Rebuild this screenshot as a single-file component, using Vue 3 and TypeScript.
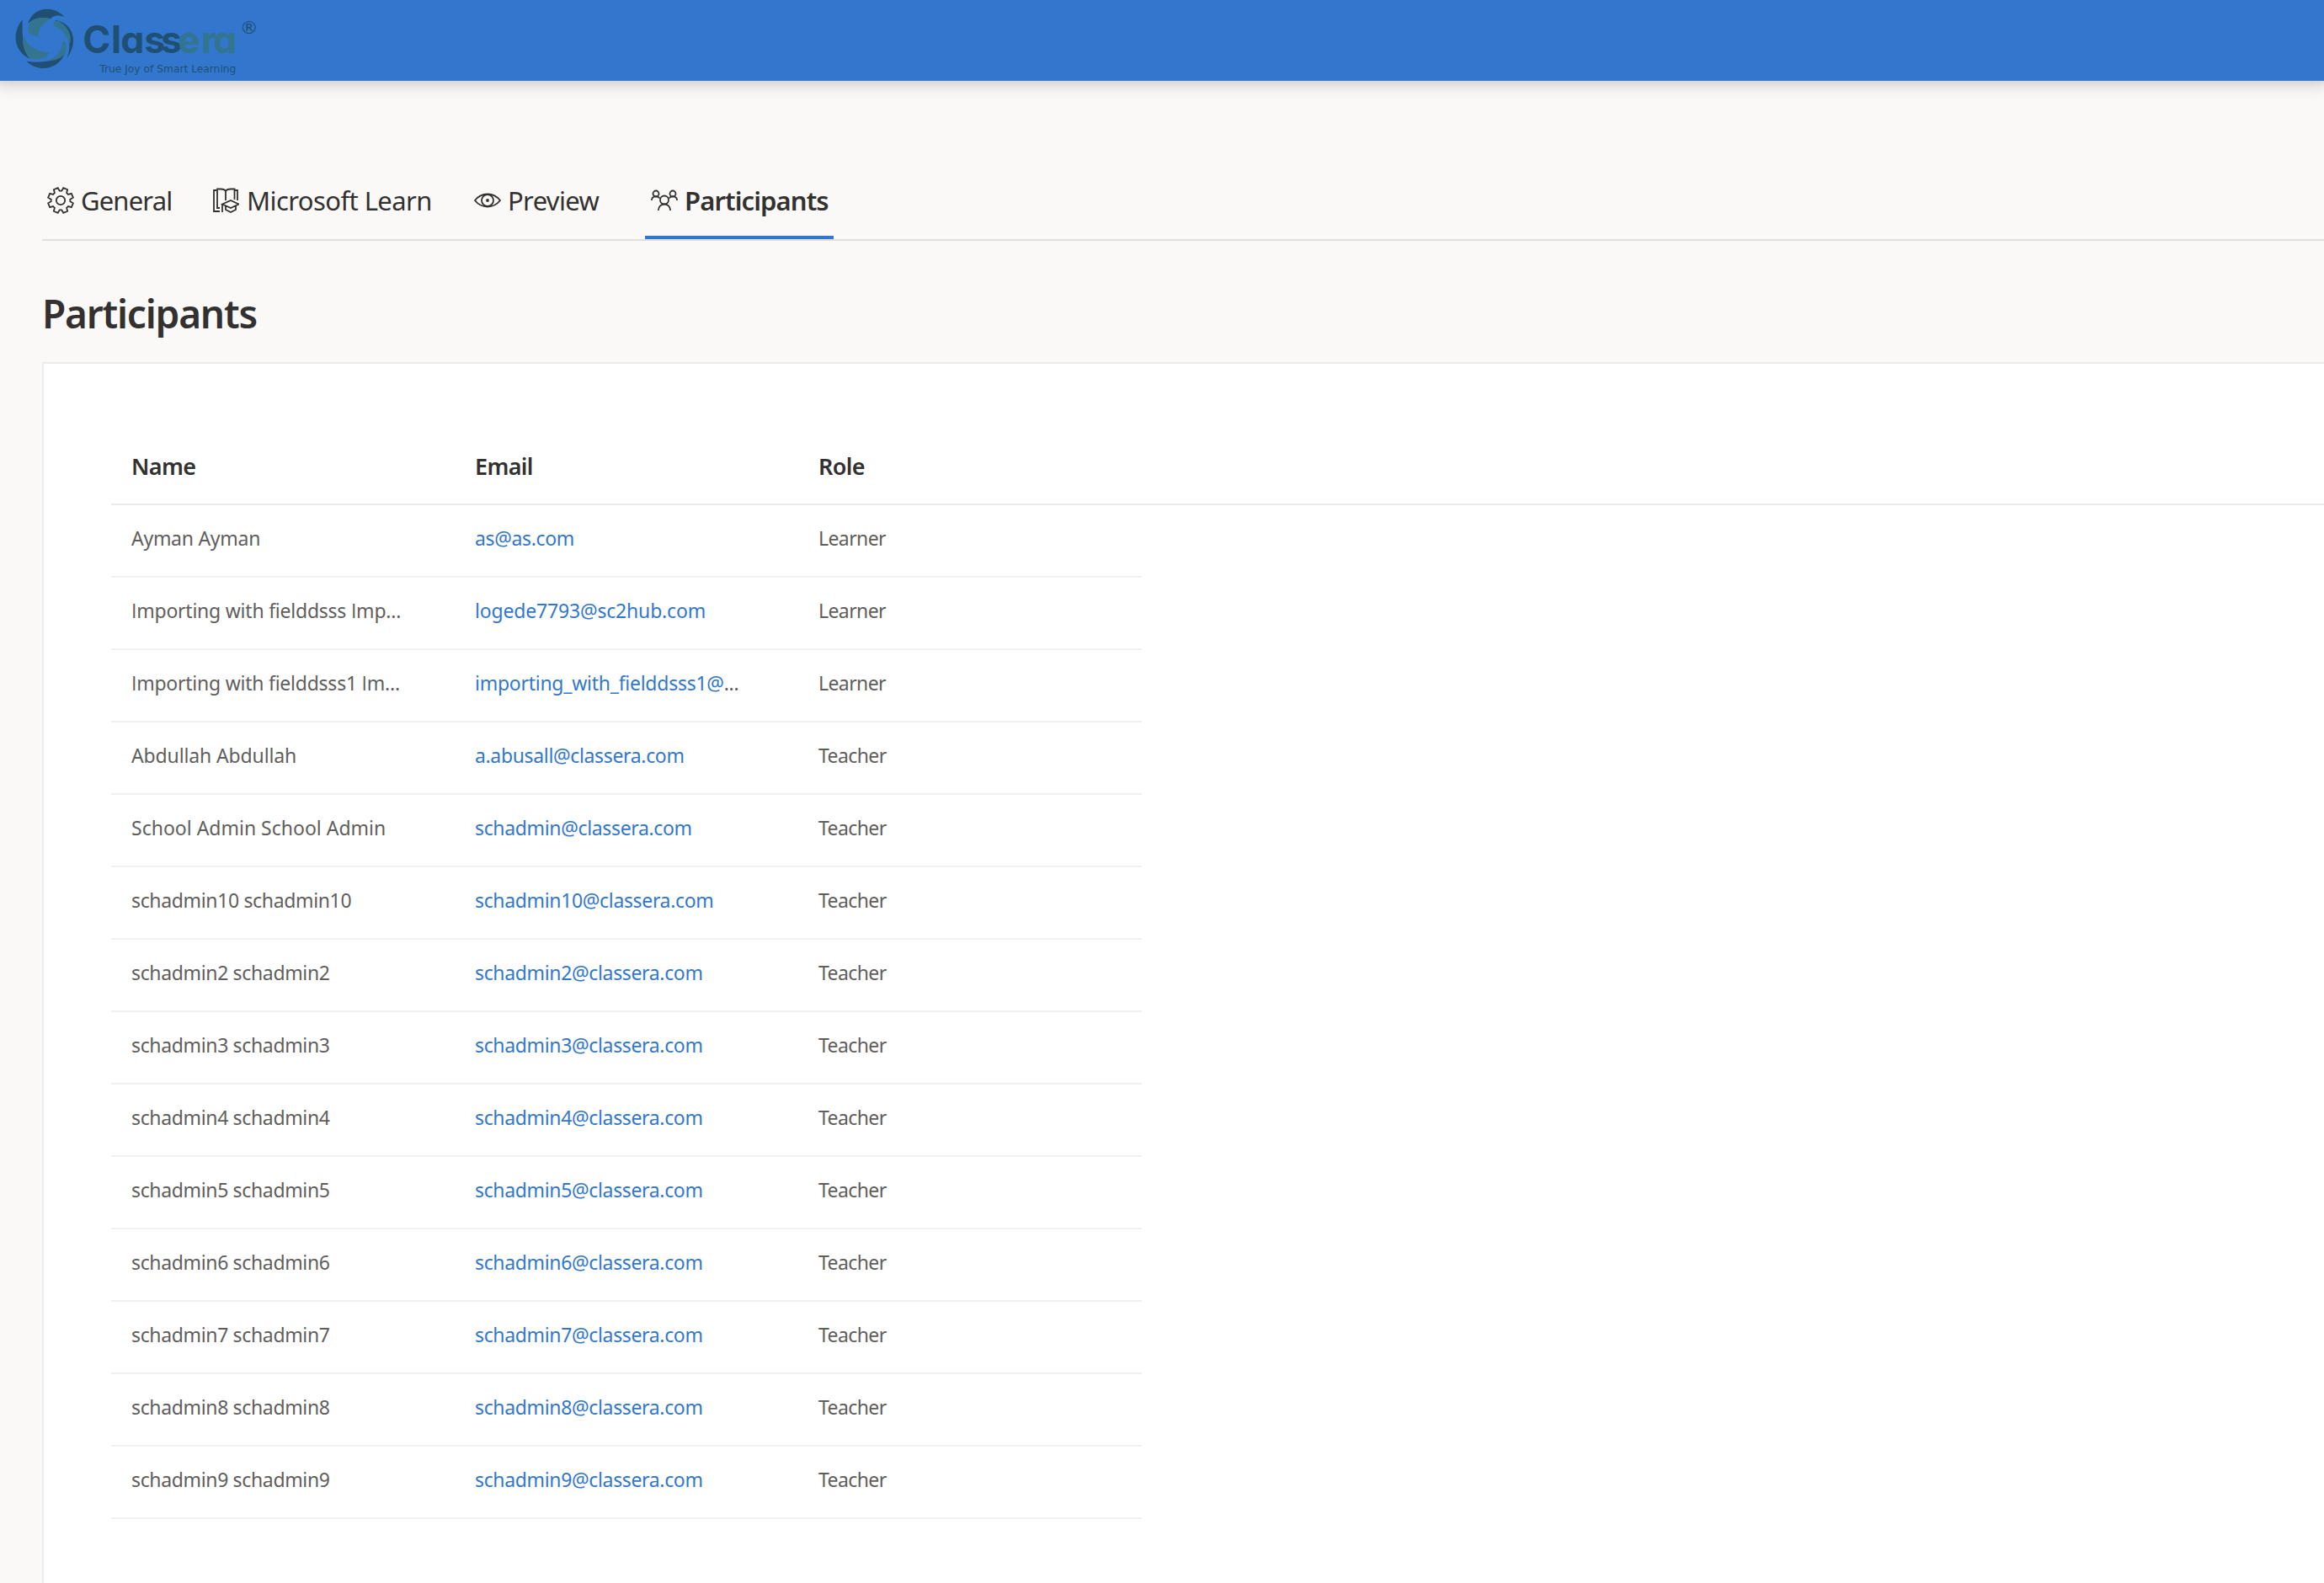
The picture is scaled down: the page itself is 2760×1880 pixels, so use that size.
<script setup lang="ts">
interface Participant {
  name: string
  email: string
  role: 'Learner' | 'Teacher'
  clipped?: boolean
  tracking?: number
  emailTracking?: number
}

const participants: Participant[] = [
  { name: 'Ayman Ayman', email: 'as@as.com', role: 'Learner', tracking: -0.27 },
  { name: 'Importing with fielddsss Imp...', email: 'logede7793@sc2hub.com', role: 'Learner', tracking: -0.23, emailTracking: -0.18 },
  { name: 'Importing with fielddsss1 Im...', email: 'importing_with_fielddsss1@', role: 'Learner', clipped: true, tracking: -0.24, emailTracking: -0.26 },
  { name: 'Abdullah Abdullah', email: 'a.abusall@classera.com', role: 'Teacher', tracking: -0.13 },
  { name: 'School Admin School Admin', email: 'schadmin@classera.com', role: 'Teacher', tracking: 0 },
  ...[10, 2, 3, 4, 5, 6, 7, 8, 9].map((n): Participant => ({
    name: `schadmin${n} schadmin${n}`,
    email: `schadmin${n}@classera.com`,
    role: 'Teacher',
  })),
]

const nameParts = (name: string) => name.split(/(I)/).filter(Boolean)

const spacing = (value?: number) => (value === undefined ? undefined : { letterSpacing: `${value}px` })

// Eight-tooth gear outline, centred on the 32px icon box
const gearPath = (() => {
  const pts: string[] = []
  const at = (r: number, deg: number) => {
    const a = (deg * Math.PI) / 180
    pts.push(`${(16 + r * Math.sin(a)).toFixed(2)} ${(16 - r * Math.cos(a)).toFixed(2)}`)
  }
  for (let k = 0; k < 8; k++) {
    const c = 22.5 + 45 * k
    at(11.4, c - 16)
    at(15.2, c - 10)
    at(15.2, c + 10)
    at(11.4, c + 16)
  }
  return `M${pts.join('L')}Z`
})()
</script>

<template>
  <div class="page">
    <header class="topbar">
      <svg class="logo" width="300" height="96" viewBox="0 0 900 288">
        <g class="navy">
          <path d="M80 70C42 115 48 182 106 210C84 184 78 140 80 70Z" />
          <path d="M100 84C116 24 190 16 230 60C208 52 190 54 180 67C150 60 120 62 100 84Z" />
          <path d="M195 72C250 76 288 140 238 208C258 160 246 112 195 72Z" />
          <path d="M95 218C130 255 205 255 231 190C200 220 140 226 95 218Z" />
        </g>
        <g class="teal">
          <path d="M82 128C98 164 130 184 176 187C164 214 128 214 106 208C88 186 78 160 82 128Z" />
          <path d="M101 112C96 60 150 60 180 66C150 82 140 106 133 130C116 126 106 120 101 112Z" />
          <path d="M190 92C190 80 200 72 210 76C244 94 258 130 249 158C238 124 220 100 190 92Z" />
          <path d="M228 145C240 156 236 182 231 192C216 210 190 218 170 217C204 202 222 180 222 150Z" />
        </g>
        <text class="word" x="295 396 430 514 573 634 717 759" y="188">Class<tspan class="teal">era</tspan></text>
        <text class="reg" x="854" y="119">®</text>
        <text class="tagline" x="355" y="258" textLength="486" lengthAdjust="spacingAndGlyphs">True Joy of Smart Learning</text>
      </svg>
    </header>

    <nav class="tabs">
      <a class="tab general">
        <svg class="icon" viewBox="0 0 32 32"><path :d="gearPath" /><circle cx="16" cy="16" r="5.2" /></svg>
        <span>General</span>
      </a>
      <a class="tab learn">
        <svg class="icon" viewBox="0 0 32 32">
          <path d="M5 4H2V29H9M9 25H6V2.500H10C13 2.500 15 3 16 5C17 3 19 2.500 22 2.500H26.500V15M27 4H30V16M16 5V16" />
          <path d="M12 20.500L22 16L31.500 20.500L22 25ZM12 20.500V30M16 23V27L22 30L28 27V23" />
        </svg>
        <span>Microsoft Learn</span>
      </a>
      <a class="tab preview">
        <svg class="icon" viewBox="0 0 32 32">
          <path d="M1 16C9 6 23 6 31 16C23 26 9 26 1 16Z" /><circle cx="16" cy="16" r="7" /><circle class="solid" cx="16" cy="16" r="1.900" />
        </svg>
        <span>Preview</span>
      </a>
      <a class="tab people active">
        <svg class="icon" viewBox="0 0 32 32">
          <circle cx="16" cy="15.500" r="5" /><circle cx="6" cy="8" r="3.500" /><circle cx="26" cy="8" r="3.500" />
          <path d="M8.800 28C9 18 23 18 23.200 28M0.900 16C1 10.500 8 10 10.500 13.500M31.100 16C31 10.500 24 10 21.500 13.500" />
        </svg>
        <span>Participants</span>
      </a>
    </nav>

    <h1 class="title">Participants</h1>

    <main class="card">
      <div class="row head">
        <div class="cell">Name</div>
        <div class="cell">Email</div>
        <div class="cell">Role</div>
      </div>
      <div v-for="p in participants" :key="p.email" class="row">
        <div class="cell" :style="spacing(p.tracking)"><span v-for="(part, i) in nameParts(p.name)" :key="i" :class="{ plain: part === 'I' }">{{ part }}</span></div>
        <div class="cell" :style="spacing(p.emailTracking)"><a>{{ p.email }}</a><template v-if="p.clipped">...</template></div>
        <div class="cell role">{{ p.role }}</div>
      </div>
    </main>
  </div>
</template>

<style>
body {
  background: #faf9f8;
}
</style>

<style scoped>
.page {
  box-sizing: border-box;
  width: 2760px;
  height: 1880px;
  overflow: hidden;
  display: flex;
  flex-direction: column;
  background: #faf9f8;
  color: #323130;
  font-family: 'Noto Sans', 'Open Sans', sans-serif;
}

.topbar {
  flex: none;
  height: 96px;
  background: #3277cd;
  box-shadow: 0 -8px 20px 8px rgba(0, 0, 0, 0.28);
}

.logo {
  display: block;
  overflow: visible;
}

.navy,
.word,
.reg,
.tagline {
  fill: #204f74;
}

.teal {
  fill: #33748f;
}

.word {
  font: 700 134px Inter, sans-serif;
  font-feature-settings: 'cv11';
}

.reg {
  font: 66px 'DejaVu Sans', sans-serif;
}

.tagline {
  font: 38px 'DejaVu Sans', sans-serif;
}

.tabs {
  flex: none;
  display: flex;
  height: 98px;
  margin: 90px 0 0 50px;
  border-bottom: 2px solid #e1dfdd;
}

.tab {
  box-sizing: border-box;
  display: flex;
  align-items: center;
  gap: 8px;
  padding: 10px 0 0 7px;
  border-bottom: 4px solid transparent;
  font-size: 31px;
  line-height: 40px;
  letter-spacing: -0.65px;
  white-space: nowrap;
}

.general {
  width: 196px;
  padding-left: 6px;
  letter-spacing: -0.85px;
}

.learn {
  width: 310px;
  padding-left: 6px;
  gap: 9px;
  letter-spacing: -0.58px;
}

.preview {
  width: 210px;
}

.people {
  width: 224px;
}

.active {
  border-color: #3277cd;
  font-weight: 600;
  letter-spacing: -0.9px;
}

.icon {
  flex: none;
  width: 32px;
  height: 32px;
  fill: none;
  stroke: #323130;
  stroke-width: 1.8;
}

.icon .solid {
  fill: #323130;
  stroke: none;
}

.title {
  flex: none;
  margin: 54px 0 0 50px;
  height: 90px;
  font-size: 46px;
  font-weight: 600;
  line-height: 64px;
  letter-spacing: -1.2px;
}

.card {
  flex: 1;
  margin-left: 50px;
  padding: 82px 0 0 80px;
  border: 2px solid #ebebeb;
  border-width: 2px 0 0 2px;
  background: #fff;
}

.row {
  box-sizing: border-box;
  display: flex;
  align-items: center;
  width: 1224px;
  height: 86px;
  padding-bottom: 6px;
  border-bottom: 2px solid #f1f1f1;
  color: #605e5c;
  font-size: 23px;
  letter-spacing: -0.35px;
}

.head {
  width: auto;
  border-color: #eaeaea;
  color: #323130;
  font-size: 27px;
  font-weight: 600;
  letter-spacing: -0.65px;
}

.cell {
  box-sizing: border-box;
  width: 408px;
  padding-left: 24px;
  white-space: nowrap;
}

.cell a {
  color: #3277cd;
}

.role {
  letter-spacing: -0.6px;
}

.plain {
  font-family: 'Open Sans', sans-serif;
}
</style>
